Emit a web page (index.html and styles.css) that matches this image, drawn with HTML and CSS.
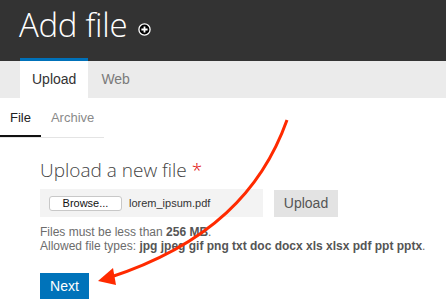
FILE: index.html
```html
<!DOCTYPE html>
<html lang="en">
<head>
    <meta charset="UTF-8">
    <title>Add file</title>
    <link rel="stylesheet" href="styles.css">
</head>
<body>
    <div class="page-header">
        <h1>Add file</h1>
        <span class="shortcut-icon">
            <svg width="13" height="13" viewBox="0 0 13 13">
                <circle cx="6.5" cy="6.5" r="5.6" fill="#000" stroke="#fff" stroke-width="1.3"/>
                <path d="M6.5 3.4v6.2M3.4 6.5h6.2" stroke="#fff" stroke-width="1.8"/>
            </svg>
        </span>
    </div>

    <ul class="primary-tabs">
        <li class="active">Upload</li>
        <li>Web</li>
    </ul>

    <ul class="secondary-tabs">
        <li class="active">File</li>
        <li>Archive</li>
    </ul>

    <div class="content">
        <h2 class="field-label">Upload a new file <span class="required">*</span></h2>

        <div class="upload-row">
            <div class="file-input">
                <span class="browse-btn">Browse...</span>
                <span class="file-name">lorem_ipsum.pdf</span>
            </div>
            <span class="upload-btn">Upload</span>
        </div>

        <div class="description">
            Files must be less than <strong>256 MB</strong>.<br>
            Allowed file types: <strong>jpg jpeg gif png txt doc docx xls xlsx pdf ppt pptx</strong>.
        </div>

        <span class="next-btn">Next</span>
    </div>

    <svg class="arrow" width="446" height="307" viewBox="0 0 446 307">
        <path d="M287 120 C 262 190, 210 245, 108 278" fill="none" stroke="#ff2a00" stroke-width="3"/>
        <path d="M98 281 L113 268 L116 285 Z" fill="#ff2a00"/>
    </svg>
</body>
</html>
```

FILE: styles.css
```css
* {
    margin: 0;
    padding: 0;
    box-sizing: border-box;
}

body {
    background: #fff;
    color: #333;
    font-family: "Liberation Sans", Arial, sans-serif;
    width: 446px;
    height: 307px;
    overflow: hidden;
    position: relative;
}

ul {
    list-style: none;
}

.page-header {
    background: #333333;
    height: 61px;
    padding-left: 19px;
    display: flex;
    align-items: flex-start;
}

.page-header h1 {
    font-family: "Open Sans", sans-serif;
    font-weight: 300;
    font-size: 33px;
    line-height: 33px;
    color: #fff;
    margin-top: 8px;
    letter-spacing: -0.3px;
}

.shortcut-icon {
    margin-left: 11px;
    margin-top: 23px;
    display: flex;
}

.primary-tabs {
    display: flex;
    background: #ebebeb;
    height: 37px;
    padding-left: 20px;
    font-size: 14px;
}

.primary-tabs li {
    padding: 0 12px;
    line-height: 37px;
    color: #7a7a7a;
}

.primary-tabs li.active {
    margin-top: -3px;
    height: 40px;
    border-top: 3px solid #0071b9;
    background: #fff;
    color: #333;
    line-height: 37px;
}

.primary-tabs li + li {
    padding-left: 13px;
}

.secondary-tabs {
    display: flex;
    width: 104px;
    border-bottom: 1px solid #e4e4e4;
    font-size: 13px;
}

.secondary-tabs li {
    height: 39px;
    line-height: 39px;
    padding: 0 10px;
    color: #8a8a8a;
}

.secondary-tabs li.active {
    color: #222;
    width: 41px;
    border-bottom: 2px solid #111;
    margin-bottom: -1px;
}

.content {
    padding-left: 40px;
}

.field-label {
    font-family: "Open Sans", sans-serif;
    font-weight: 300;
    font-size: 19px;
    color: #444;
    margin-top: 19px;
    line-height: 26px;
}

.required {
    color: #e00000;
}

.upload-row {
    display: flex;
    gap: 11px;
    margin-top: 6px;
    align-items: flex-start;
}

.file-input {
    background: #f3f3f3;
    width: 223px;
    height: 28px;
    display: flex;
    align-items: center;
    padding-left: 9px;
    gap: 7px;
    font-size: 11px;
}

.browse-btn {
    background: #fff;
    border: 1px solid #c8c8c8;
    border-radius: 3px;
    width: 73px;
    height: 15px;
    line-height: 13px;
    text-align: center;
    color: #111;
}

.file-name {
    color: #333;
}

.upload-btn {
    background: #e3e3e3;
    color: #555;
    font-size: 14px;
    width: 64px;
    height: 27px;
    line-height: 27px;
    text-align: center;
    margin-top: 1px;
}

.description {
    font-size: 12px;
    line-height: 14px;
    color: #6c6c6c;
    margin-top: 8px;
}

.description strong {
    color: #555;
}

.next-btn {
    display: inline-block;
    margin-top: 20px;
    background: #0073ba;
    color: #fff;
    font-size: 14px;
    width: 49px;
    height: 26px;
    line-height: 26px;
    text-align: center;
}

.arrow {
    position: absolute;
    left: 0;
    top: 0;
    pointer-events: none;
}
```
